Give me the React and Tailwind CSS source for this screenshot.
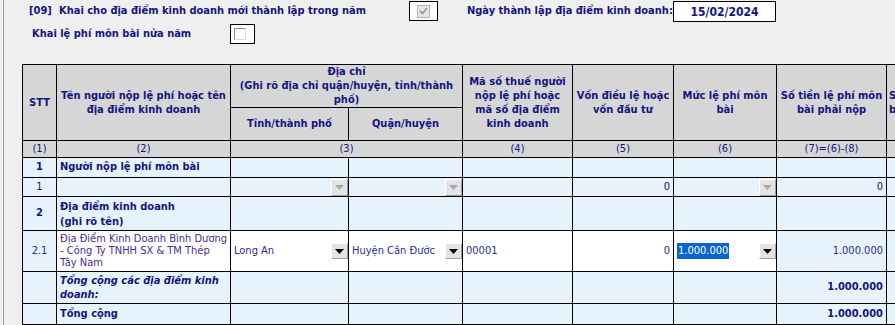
import React from 'react';

const cols = [34, 174, 118, 114, 110, 101, 103, 110, 120];

const DropBtn = ({ disabled, full }) => (
  <div
    className={`flex w-[17px] shrink-0 items-center justify-center border border-t-white border-l-white border-r-[#a0a0a0] border-b-[#a0a0a0] bg-[#e4e4e4] ${
      full ? 'self-stretch' : 'h-[17px]'
    }`}
  >
    <svg width="9" height="5" viewBox="0 0 9 5">
      <path d="M0 0h9L4.5 5z" fill={disabled ? '#a8a8a8' : '#000'} />
    </svg>
  </div>
);

const Hd = ({ children, className = '', ...rest }) => (
  <th
    {...rest}
    className={`border border-black bg-[#d6d6d6] px-[2px] text-center align-middle font-bold leading-[14px] ${className}`}
  >
    {children}
  </th>
);

const Td = ({ children, className = '', ...rest }) => (
  <td {...rest} className={`border border-black px-[3px] align-middle ${className}`}>
    {children}
  </td>
);

const DropCell = ({ text, disabled, white }) => (
  <td className={`border border-black p-0 ${white ? 'bg-white' : 'bg-[#e6f3fd]'}`}>
    <div className={`flex h-full justify-between ${disabled ? 'items-end' : 'items-center'}`}>
      <span className="pl-[3px] text-[#2a2a9a]">{text}</span>
      <DropBtn disabled={disabled} full={!disabled} />
    </div>
  </td>
);

export default function App() {
  return (
    <div className="h-[325px] w-[895px] overflow-hidden bg-[#efefef] pl-[3px] font-['DejaVu_Sans_Condensed','DejaVu_Sans',sans-serif] text-[11px] text-[#14147f] [font-stretch:semi-condensed]">
      <div className="h-full border-l border-[#a0a0a0] pl-[18px]">
        <div className="flex h-[21px] items-center pt-[1px] font-bold">
          <span className="w-[37px] pl-[7px]">[09]</span>
          <span className="w-[350px]">Khai cho địa điểm kinh doanh mới thành lập trong năm</span>
          <div className="flex h-[20px] w-[29px] items-center justify-center self-start border border-black bg-white">
            <div className="flex h-[13px] w-[13px] items-center justify-center border border-[#b4b4b4] bg-[#e6e6e6]">
              <svg width="9" height="8" viewBox="0 0 9 8">
                <path d="M1 4l2.5 2.5L8 1" fill="none" stroke="#9a9a9a" strokeWidth="1.8" />
              </svg>
            </div>
          </div>
          <span className="ml-[29px] w-[206px]">Ngày thành lập địa điểm kinh doanh:</span>
          <div className="flex h-[21px] w-[103px] items-center justify-center self-start border border-black bg-white text-[12px]">
            15/02/2024
          </div>
        </div>
        <div className="mt-[3px] flex h-[20px] items-center font-bold">
          <span className="w-[208px] pl-[10px]">Khai lệ phí môn bài nửa năm</span>
          <div className="flex h-[20px] w-[25px] items-center border border-black bg-white pl-[3px]">
            <div className="h-[12px] w-[12px] border border-t-[#8a8a8a] border-l-[#8a8a8a] border-r-[#dcdcdc] border-b-[#dcdcdc] bg-white" />
          </div>
        </div>

        <table className="mt-[20px] table-fixed border-collapse" style={{ width: cols.reduce((a, b) => a + b, 0) }}>
          <colgroup>
            {cols.map((w, i) => (
              <col key={i} style={{ width: w }} />
            ))}
          </colgroup>
          <thead>
            <tr className="h-[43px]">
              <Hd rowSpan={2}>STT</Hd>
              <Hd rowSpan={2}>Tên người nộp lệ phí hoặc tên địa điểm kinh doanh</Hd>
              <Hd colSpan={2}>
                Địa chỉ
                <br />
                (Ghi rõ địa chỉ quận/huyện, tỉnh/thành phố)
              </Hd>
              <Hd rowSpan={2}>Mã số thuế người nộp lệ phí hoặc mã số địa điểm kinh doanh</Hd>
              <Hd rowSpan={2}>Vốn điều lệ hoặc vốn đầu tư</Hd>
              <Hd rowSpan={2}>Mức lệ phí môn bài</Hd>
              <Hd rowSpan={2}>Số tiền lệ phí môn bài phải nộp</Hd>
              <Hd rowSpan={2} className="text-left">
                Số tiền lệ phí môn bài được miễn
              </Hd>
            </tr>
            <tr className="h-[33px]">
              <Hd>Tỉnh/thành phố</Hd>
              <Hd>Quận/huyện</Hd>
            </tr>
            <tr className="h-[17px] font-normal">
              {['(1)', '(2)', '(3)', '(4)', '(5)', '(6)', '(7)=(6)-(8)', ''].map((t, i) => (
                <Hd key={i} colSpan={i === 2 ? 2 : 1} className="!font-normal">
                  {t}
                </Hd>
              ))}
            </tr>
          </thead>
          <tbody className="bg-[#e6f3fd]">
            <tr className="h-[20px] font-bold">
              <Td className="text-center">1</Td>
              <Td>Người nộp lệ phí môn bài</Td>
              <Td />
              <Td />
              <Td />
              <Td />
              <Td />
              <Td />
              <Td />
            </tr>
            <tr className="h-[19px]">
              <Td className="text-center">1</Td>
              <Td />
              <DropCell disabled />
              <DropCell disabled />
              <Td />
              <Td className="text-right">0</Td>
              <DropCell disabled />
              <Td className="text-right">0</Td>
              <Td />
            </tr>
            <tr className="h-[34px] font-bold">
              <Td className="text-center">2</Td>
              <Td className="leading-[15px]">
                Địa điểm kinh doanh
                <br />
                (ghi rõ tên)
              </Td>
              <Td />
              <Td />
              <Td />
              <Td />
              <Td />
              <Td />
              <Td />
            </tr>
            <tr className="h-[41px] text-[#2a2a9a]">
              <Td className="text-center">2.1</Td>
              <Td className="bg-white leading-[12px] text-[#4a2a9a]">
                Địa Điểm Kinh Doanh Bình Dương - Công Ty TNHH SX &amp; TM Thép Tây Nam
              </Td>
              <DropCell text="Long An" white />
              <DropCell text="Huyện Cần Đước" white />
              <Td className="bg-white">00001</Td>
              <Td className="bg-white text-right">0</Td>
              <td className="border border-black bg-white p-0">
                <div className="flex h-full items-center justify-between">
                  <span className="ml-[3px] bg-[#0a64d2] px-[1px] text-white">1.000.000</span>
                  <DropBtn full />
                </div>
              </td>
              <Td className="text-right">1.000.000</Td>
              <Td />
            </tr>
            <tr className="h-[32px] font-bold">
              <Td />
              <Td className="italic leading-[14px]">Tổng cộng các địa điểm kinh doanh:</Td>
              <Td />
              <Td />
              <Td />
              <Td />
              <Td />
              <Td className="text-right">1.000.000</Td>
              <Td />
            </tr>
            <tr className="h-[21px] font-bold">
              <Td />
              <Td>Tổng cộng</Td>
              <Td />
              <Td />
              <Td />
              <Td />
              <Td />
              <Td className="text-right">1.000.000</Td>
              <Td />
            </tr>
          </tbody>
        </table>
      </div>
    </div>
  );
}
